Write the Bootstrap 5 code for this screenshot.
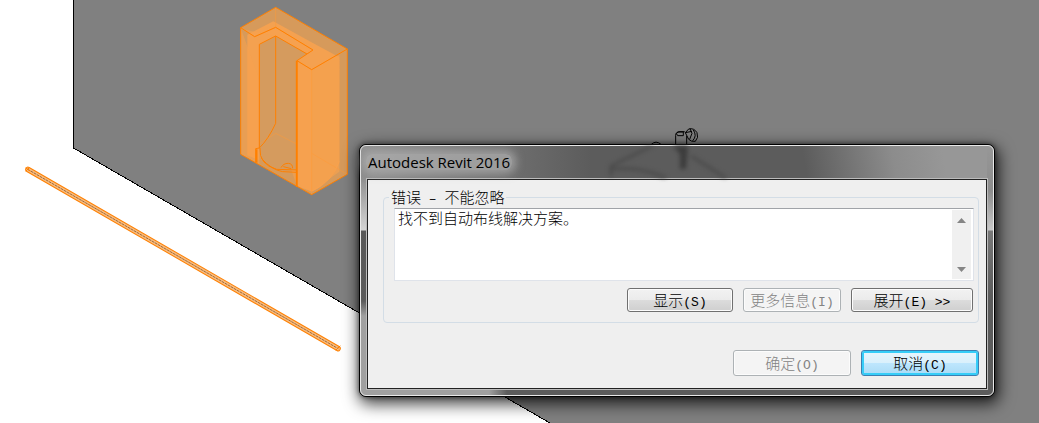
<!DOCTYPE html>
<html lang="zh-CN">
<head>
<meta charset="utf-8">
<meta name="viewport" content="width=device-width, initial-scale=1">
<title>Autodesk Revit 2016</title>
<link href="https://cdn.jsdelivr.net/npm/bootstrap@5.3.0/dist/css/bootstrap.min.css" rel="stylesheet">
<style>
  body { font-family: "Noto Sans CJK SC", sans-serif; font-size: 15px; font-weight: 300; line-height: 21px; color: #000; }
  .scene { width: 100%; height: 100%; }
  .win {
    left: 359px; right: 44px; top: 144px;
    border: 1px solid #000; border-radius: 7px; background: #5c5c5c;
    box-shadow: 0 0 5px rgba(0,0,0,.55), 2px 5px 16px 2px rgba(0,0,0,.75);
  }
  .glass {
    border: 1px solid #e8e8e8; border-radius: 6px; padding: 0 5px 5px;
    background:
      linear-gradient(#909090, #8c8c8c 30px, #d4d4d4 84px, #585858 85px, #5c5c5c 155px, #a0a0a0 170px) left / 6px 100% no-repeat,
      linear-gradient(#979797, #8c8c8c 45px, #c8c8c8 84px, #787878 85px, #5c5c5c 150px) right / 6px 100% no-repeat,
      linear-gradient(90deg, #a0a0a0 128px, #5c5c5c 146px) bottom / 100% 6px no-repeat,
      linear-gradient(80deg, transparent 70%, #8c8c8c 84%, #979797 92%) top / 100% 32px no-repeat,
      linear-gradient(90deg, #909090, #5c5c5c 230px);
  }
  .titlebar { height: 32px; }
  .title-text {
    font: 15px/16px "Open Sans", sans-serif; padding: 0 2px; border-radius: 6px;
    background: rgba(175,175,175,.7); box-shadow: 0 0 8px 4px rgba(175,175,175,.7);
  }
  .ghost { left: 245px; top: 0; width: 130px; height: 32px; filter: blur(2px); }
  .client {
    border: 1px solid #222; outline: 1px solid #bcbcbc; background: #efefef;
    margin: 1px; padding: 7px 7px 12px 15px;
  }
  .group-box { border: 1px solid #d3dde6; border-radius: 4px; padding: 0 4px 10px 10px; }
  .group-title { font-size: 15px; line-height: 19px; height: 21px; margin: 0 0 0 -5px; padding: 0 2px; }
  .message-box { border: 1px solid #dfe3ea; border-top-color: #a0a3a8; background: #fff; height: 73px; padding: 1px; }
  .message-box textarea { resize: none; border: 0; outline: 0; padding: 0 2px; font: inherit; line-height: 16px; overflow: hidden; background: #fff; color: #000; }
  .scroller { width: 20px; background: #f0f0f0; border: solid #fff; border-width: 0 1px 0 0; }
  .scroller button { border: 0; background: none; padding: 0; height: 20px; line-height: 0; }
  .dlg-btn {
    height: 24px; padding: 0; border: 1px solid #707070; border-radius: 3px; color: #000;
    font-size: 15px; font-weight: 300; line-height: 20px; box-shadow: inset 0 0 0 1px #fcfcfc;
    background: linear-gradient(#f2f2f2, #ebebeb 50%, #dcdcdc 50%, #cfcfcf);
  }
  .dlg-btn:disabled { background: #f4f4f4; border-color: #adb2b5; color: #838383; opacity: 1; }
  .dlg-btn.tall { height: 26px; width: 118px; }
  .dlg-btn.primary-action { border-color: #3c7fb1; box-shadow: inset 0 0 0 2px #36cdf8; background: linear-gradient(#e9f5fc, #d9f0fc 50%, #bee6fd 50%, #a9dbf6); }
  .key { font-family: "Liberation Mono", monospace; font-size: 13px; line-height: 13px; white-space: pre; }
  .w-show { width: 106px; } .w-info { width: 98px; } .w-expand { width: 122px; }
  .button-row { margin: 7px 1px 0 0; gap: 10px; }
  .action-row { margin-top: 27px; gap: 10px; }
</style>
</head>
<body>
<main class="position-relative vh-100 overflow-hidden bg-white">
  <svg class="scene d-block" viewBox="0 0 1039 423" preserveAspectRatio="xMinYMin slice" aria-hidden="true">
    <path d="M73 0H1039V423H550L73 148Z" fill="#808080"/>
    <path d="M73.500 0V148L550 423" fill="none" stroke="#000" shape-rendering="crispEdges"/>
    <!-- pipe -->
    <g stroke-linecap="round">
      <path d="M28 169.500L338 348.500" stroke="#ff8000" stroke-width="5.600"/>
      <path d="M28 169.500L338 348.500" stroke="#f8bc80" stroke-width="3.600"/>
      <path d="M28 169.500L338 348.500" stroke="#a06a35" stroke-width="1" stroke-dasharray="2 1.500"/>
      <path d="M26 168l4 3m-4 0l3-3M336 350l4-4" stroke="#ff8000"/>
    </g>
    <!-- urinal -->
    <g transform="translate(220) scale(.3333)" fill="none" stroke-linejoin="round">
      <path d="M62 83L167 22L382 147V523L275 584L62 463Z" fill="#d69a5b"/>
      <path d="M82 104L160 64L280 130L358 172V485Q330 550 275 574L230 558V182L262 160L167 110L118 133V480L82 466Z" fill="#f4a150"/>
      <path d="M62 83L104 110L167 82L279 150L231 182L275 209L358 165V485Q330 550 275 575L231 558M62 86V463L118 493V133L167 108" fill="#f8a24e" fill-opacity=".55"/>
      <path d="M118 133L167 108L261 162L231 182V510L170 508Q124 490 118 445Z" fill="#d59b5e"/>
      <path d="M275 209V574L358 515V165Z" fill="#f4a14f" opacity=".7"/>
      <path d="M167 22V80M382 147L275 209L231 182L279 150L167 82L104 110L62 83M275 209V584M167 400L230 432M167 400L120 430M275 460L382 523" stroke="#ff9a36" stroke-width="2" opacity=".75"/>
      <path d="M62 83L167 22L382 147V523L275 584L62 463ZM62 83L104 110L167 82L279 150L231 182L275 209L382 147M118 445V133L167 108L261 162M167 108V370Q145 418 118 444L107 446V488M120 444Q116 493 170 508L230 510M124 475Q155 510 188 515L230 517M231 182V560M183 503Q190 490 205 490Q218 491 218 505M190 500L214 506" stroke="#ff8000" stroke-width="3"/>
      <path d="M230 182V560M110 448V488" stroke="#ff8000" stroke-width="5"/>
      <path d="M275 574Q338 545 358 485" stroke="#ffa249" stroke-width="2"/>
    </g>
    <!-- tap -->
    <g transform="translate(600 120) scale(.3333)" fill="none" stroke="#000" stroke-width="3">
      <path d="M227 74V46Q227 36 240 35H254M260 74V48M233 36H250V47H233Q226 41 233 36M256 38L266 27Q282 23 291 38Q297 53 286 64Q274 66 266 58L256 38M270 26L276 40L269 58M280 30Q292 48 278 62M256 38L276 34M153 74Q168 59 184 74"/>
    </g>
  </svg>

  <section class="win position-absolute" role="dialog" aria-labelledby="dlgTitle">
    <div class="glass position-relative">
      <svg class="ghost position-absolute" viewBox="0 0 130 32" aria-hidden="true">
        <path d="M5 30V20L50 -2M5 23Q35 20 60 32M85 10L120 32" fill="none" stroke="#484848" stroke-width="2.500"/>
        <path d="M67 0H82L80 23H74V8Z" fill="#3c3c3c"/>
      </svg>
      <header class="titlebar d-flex align-items-center position-relative">
        <h1 class="title-text mb-0" id="dlgTitle">Autodesk Revit 2016</h1>
      </header>
      <form class="client">
        <fieldset class="group-box">
          <legend class="group-title float-none w-auto">错误<span class="key"> – </span>不能忽略</legend>
          <div class="message-box d-flex">
            <textarea class="flex-grow-1" readonly aria-label="错误信息">找不到自动布线解决方案。</textarea>
            <div class="scroller d-flex flex-column justify-content-between">
              <button type="button" aria-label="向上滚动"><svg width="9" height="5"><path d="M0 5L4.500 0L9 5Z" fill="#858585"/></svg></button>
              <button type="button" aria-label="向下滚动"><svg width="9" height="5"><path d="M0 0H9L4.500 5Z" fill="#858585"/></svg></button>
            </div>
          </div>
          <div class="button-row d-flex justify-content-end">
            <button type="button" class="btn dlg-btn w-show">显示<span class="key">(S)</span></button>
            <button type="button" class="btn dlg-btn w-info" disabled>更多信息<span class="key">(I)</span></button>
            <button type="button" class="btn dlg-btn w-expand">展开<span class="key">(E) &gt;&gt;</span></button>
          </div>
        </fieldset>
        <div class="action-row d-flex justify-content-end">
          <button type="submit" class="btn dlg-btn tall" disabled>确定<span class="key">(O)</span></button>
          <button type="button" class="btn dlg-btn tall primary-action">取消<span class="key">(C)</span></button>
        </div>
      </form>
    </div>
  </section>
</main>
<script src="https://cdn.jsdelivr.net/npm/bootstrap@5.3.0/dist/js/bootstrap.bundle.min.js"></script>
</body>
</html>
